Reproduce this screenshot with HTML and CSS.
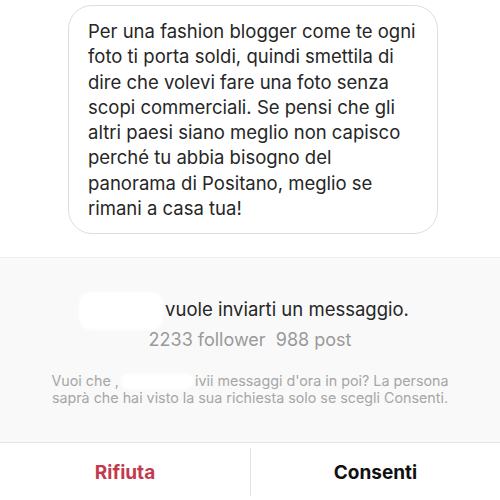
FILE: index.html
```html
<!DOCTYPE html>
<html lang="it">
<head>
  <meta charset="UTF-8">
  <meta name="viewport" content="width=device-width, initial-scale=1.0">
  <title>Richiesta di messaggio</title>
  <link rel="stylesheet" href="styles.css">
</head>
<body>
  <div class="screen">
    <div class="thread">
      <div class="bubble">
        Per una fashion blogger come te ogni foto ti porta soldi, quindi smettila di dire che volevi fare una foto senza scopi commerciali. Se pensi che gli altri paesi siano meglio non capisco perché tu abbia bisogno del panorama di Positano, meglio se rimani a casa tua!
      </div>
    </div>

    <div class="request">
      <div class="title"><span class="redact big"></span>vuole inviarti un messaggio.</div>
      <div class="stats">2233 follower&nbsp;&nbsp;988 post</div>
      <p class="note">Vuoi che ,<span class="redact small"></span>ivii messaggi d'ora in poi? La persona saprà che hai visto la sua richiesta solo se scegli Consenti.</p>
    </div>

    <div class="actions">
      <button class="action decline">Rifiuta</button>
      <button class="action accept">Consenti</button>
    </div>
  </div>
</body>
</html>
```

FILE: styles.css
```css
body {
  margin: 0;
  background-color: #fff;
  font-family: Inter, "Liberation Sans", Arial, sans-serif;
}
.screen {
  width: 500px;
  height: 500px;
  overflow: hidden;
}
.thread {
  height: 257px;
  padding: 5px 0 0 68px;
  box-sizing: border-box;
}
.bubble {
  width: 370px;
  height: 229px;
  box-sizing: border-box;
  padding: 13px 18px 0 19px;
  border: 1.5px solid #dedede;
  border-radius: 24px;
  font-size: 18.5px;
  line-height: 25.3px;
  color: #262626;
}
.request {
  height: 186px;
  box-sizing: border-box;
  padding-top: 34px;
  background-color: #f9f9f9;
  border-top: 1px solid #efefef;
  border-bottom: 1px solid #e4e4e4;
  text-align: center;
}
.title {
  font-size: 18.5px;
  line-height: 24px;
  color: #262626;
  padding-right: 12px;
}
.redact {
  display: inline-block;
  background-color: #fff;
  filter: blur(1px);
}
.redact.big {
  width: 84px;
  height: 38px;
  border-radius: 12px;
  margin-right: 2px;
  vertical-align: middle;
}
.redact.small {
  width: 72px;
  height: 15px;
  border-radius: 6px;
  margin: 0 2px;
  vertical-align: -3px;
}
.stats {
  margin-top: 0;
  font-size: 18px;
  line-height: 20px;
  color: #9a9a9a;
}
.note {
  margin: 22px 36px 0;
  font-size: 14.3px;
  line-height: 17px;
  color: #a6a6a6;
}
.actions {
  display: grid;
  grid-template-columns: 1fr 1fr;
  padding: 5px 0 4px;
}
.action {
  height: 48px;
  border: none;
  background: none;
  font-family: inherit;
  font-size: 19px;
  font-weight: 700;
  cursor: pointer;
}
.decline {
  color: #c33a4d;
}
.accept {
  color: #111;
  border-left: 1px solid #e2e2e2;
}
```
